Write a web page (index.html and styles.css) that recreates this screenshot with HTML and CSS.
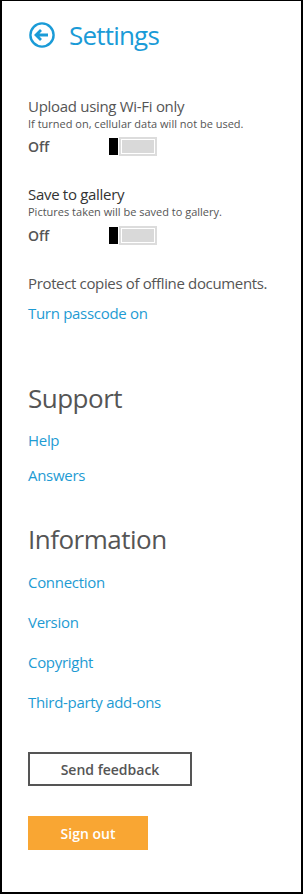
FILE: index.html
```html
<!DOCTYPE html>
<html>
<head>
<meta charset="utf-8">
<link rel="stylesheet" href="styles.css">
</head>
<body>
<div class="page">
  <header class="header">
    <svg class="back" width="26" height="26" viewBox="0 0 26 26">
      <circle cx="13" cy="13" r="11.6" fill="none" stroke="#1a9bd7" stroke-width="2.4"/>
      <path d="M7 13 H19 M12 8 L7 13 L12 18" fill="none" stroke="#1a9bd7" stroke-width="2.8" stroke-linecap="butt" stroke-linejoin="miter"/>
    </svg>
    <h1 class="title">Settings</h1>
  </header>

  <section class="setting s-first">
    <div class="label">Upload using Wi-Fi only</div>
    <div class="hint">If turned on, cellular data will not be used.</div>
    <div class="toggle-row">
      <span class="state">Off</span>
      <span class="switch"><span class="thumb"></span><span class="track"></span></span>
    </div>
  </section>

  <section class="setting s-next">
    <div class="label dark">Save to gallery</div>
    <div class="hint">Pictures taken will be saved to gallery.</div>
    <div class="toggle-row">
      <span class="state">Off</span>
      <span class="switch"><span class="thumb"></span><span class="track"></span></span>
    </div>
  </section>

  <div class="protect">Protect copies of offline documents.</div>
  <a class="link passcode">Turn passcode on</a>

  <h2 class="heading support">Support</h2>
  <nav class="links tight">
    <a class="link">Help</a>
    <a class="link">Answers</a>
  </nav>

  <h2 class="heading info">Information</h2>
  <nav class="links wide">
    <a class="link">Connection</a>
    <a class="link">Version</a>
    <a class="link">Copyright</a>
    <a class="link">Third-party add-ons</a>
  </nav>

  <button class="btn feedback">Send feedback</button>
  <button class="btn signout">Sign out</button>
</div>
</body>
</html>
```

FILE: styles.css
```css
* { box-sizing: border-box; }
html, body { margin: 0; padding: 0; background: #fff; }
body { font-family: "Open Sans", "Noto Sans", sans-serif; color: #555; }

.page {
  width: 303px;
  height: 894px;
  border-style: solid;
  border-color: #000;
  border-width: 1px 2px 2px 2px;
  padding-left: 26px;
  display: flex;
  flex-direction: column;
  align-items: flex-start;
}

.header {
  margin-top: 14px;
  height: 40px;
  display: flex;
  align-items: center;
  gap: 14px;
}
.back { display: block; margin-left: 1px; }
.title {
  margin: 0;
  font-weight: 400;
  font-size: 26px;
  line-height: 40px;
  letter-spacing: -0.8px;
  color: #1a9bd7;
}

.setting { display: flex; flex-direction: column; }
.s-first { margin-top: 41px; }
.s-next { margin-top: 28px; }

.label { font-size: 15px; line-height: 20px; letter-spacing: -0.3px; color: #555; }
.label.dark { color: #333; }
.hint { font-size: 11px; line-height: 16px; color: #555; }

.toggle-row { display: flex; align-items: center; height: 19px; margin-top: 5px; }
.s-next .toggle-row { margin-top: 6px; }
.state { width: 80px; font-size: 14px; font-weight: 600; color: #555; line-height: 19px; }
.switch { display: flex; width: 49px; height: 19px; }
.thumb { width: 11px; height: 19px; background: #000; border: 1px solid #fff; }
.track {
  flex: 1;
  height: 19px;
  background: #d9d9d9;
  border: 2px solid #dcdcdc;
  box-shadow: inset 0 0 0 1px #fff;
}

.protect { margin-top: 28px; font-size: 15px; line-height: 20px; letter-spacing: -0.35px; color: #555; }

.link { display: block; font-size: 15px; line-height: 20px; letter-spacing: -0.3px; color: #1e9bd3; text-decoration: none; }
.passcode { margin-top: 10px; }

.heading { margin: 0; font-weight: 400; font-size: 26px; line-height: 36px; letter-spacing: -0.5px; color: #555; }
.support { margin-top: 57px; }
.info { margin-top: 36px; }

.links { display: flex; flex-direction: column; }
.tight { margin-top: 14px; gap: 15px; }
.wide { margin-top: 15px; gap: 20px; }

.btn {
  font-family: "Open Sans", "Noto Sans", sans-serif;
  font-size: 14px;
  font-weight: 600;
  height: 34px;
  padding: 0;
  cursor: pointer;
}
.feedback {
  margin-top: 40px;
  width: 164px;
  background: #fff;
  color: #555;
  border: 2px solid #555;
}
.signout {
  margin-top: 30px;
  width: 120px;
  background: #f9a633;
  color: #fff;
  border: none;
}
```
